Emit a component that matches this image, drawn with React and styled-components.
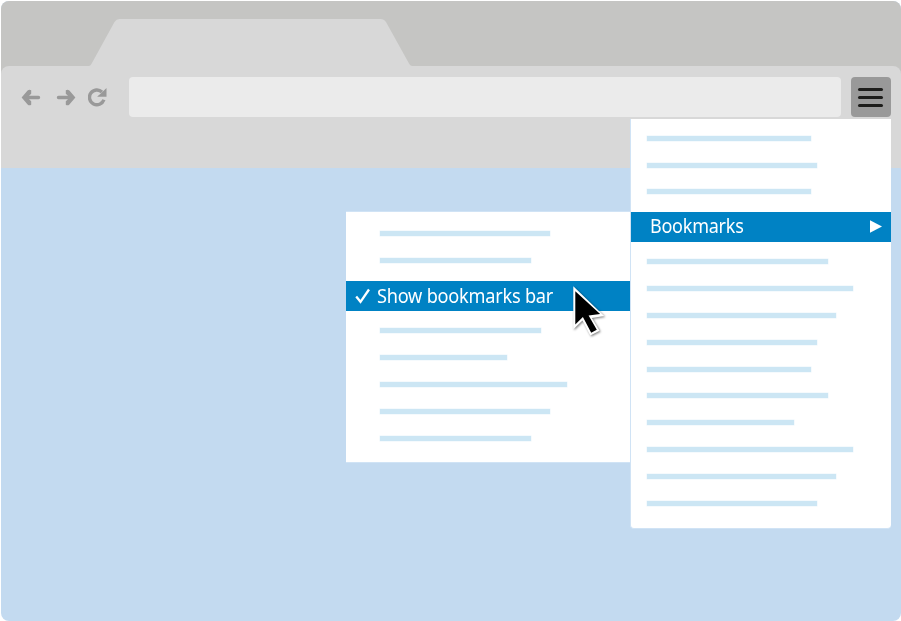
import React from "react";
import styled, { createGlobalStyle } from "styled-components";

const GlobalStyle = createGlobalStyle`
  *, *::before, *::after { box-sizing: border-box; }
  html, body { margin: 0; background: #fff; overflow: hidden; }
  body { font-family: "Noto Sans", "Open Sans", sans-serif; }
  svg { display: block; }
`;

const BrowserWindow = styled.main`
  position: relative;
  width: 900px;
  height: 620px;
  margin: 1px 0 0 1px;
  border-radius: 8px;
  overflow: hidden;
  background: #c3daf0;
`;

const TopArea = styled.header`
  height: 167px;
  background: #c5c5c3;
`;

const TabStrip = styled.div`
  height: 65px;
  padding: 18px 0 0 87.5px;
`;

const Toolbar = styled.div`
  display: flex;
  align-items: flex-start;
  height: 102px;
  padding: 11px 10px 0 20px;
  border-radius: 8px 8px 0 0;
  background: #d8d8d8;
`;

const NavIcons = styled.div`
  display: flex;
  align-items: center;
  gap: 12.5px;
  width: 108px;
  height: 40px;
`;

const AddressBar = styled.div`
  width: 712px;
  height: 40px;
  margin-right: 10px;
  border-radius: 4px;
  background: #ebebeb;
`;

const MenuButton = styled.button`
  display: flex;
  flex-direction: column;
  align-items: center;
  justify-content: center;
  gap: 5px;
  width: 40px;
  height: 40px;
  padding: 0 1px 0 0;
  border: 0;
  border-radius: 4px;
  background: #999;
`;

const MenuStroke = styled.span`
  width: 25px;
  height: 3px;
  border-radius: 2px;
  background: #1d1d1b;
`;

const MenuPanel = styled.section`
  position: absolute;
  left: 629px;
  top: 118px;
  width: 261px;
  height: 410px;
  border: solid #d0e3f5;
  border-width: 0 0 1px 1px;
  border-radius: 0 0 4px 4px;
  background: #fff;
`;

const SubmenuPanel = styled.section`
  position: absolute;
  left: 345px;
  top: 210px;
  width: 284px;
  height: 252px;
  border: solid #d0e3f5;
  border-width: 1px 0;
  background: #fff;
`;

const PlaceholderGroup = styled.div`
  display: flex;
  flex-direction: column;
  gap: ${(p) => p.$gap ?? 21.87}px;
  height: ${(p) => p.$height}px;
  padding: ${(p) => p.$top}px 0 0 ${(p) => p.$left}px;
`;

const Placeholder = styled.span`
  flex: none;
  width: ${(p) => p.$width}px;
  height: 5px;
  background: #cce6f4;
  box-shadow: 0 0 0 0.5px rgba(204, 230, 244, 0.4);
`;

const ActiveItem = styled.div`
  display: flex;
  align-items: center;
  height: 30px;
  padding: 0 9px 0 ${(p) => p.$left}px;
  background: #0082c4;
  color: #fff;
  font-size: 19px;
  letter-spacing: -0.25px;
  white-space: nowrap;
`;

const ItemLabel = styled.span`
  flex: 1;
  height: 30px;
  line-height: ${(p) => p.$leading}px;
  transform: scaleX(${(p) => p.$stretch});
  transform-origin: left center;
`;

const CheckSlot = styled.span`
  flex: none;
  width: 22px;
`;

const Pointer = styled.svg`
  position: absolute;
  left: 569px;
  top: 282px;
  filter: drop-shadow(1px 1px 1px rgba(0, 0, 0, 0.5));
`;

const TabShape = () => (
  <svg width="323" height="47" viewBox="0 0 323 47">
    <path d="M0 47Q1.700 46.500 2.700 44.500L25.500 3Q27.300 0 30.500 0H291.500Q295 0 297 3L320 44.500Q321 46.500 323 47Z" fill="#d8d8d8" />
  </svg>
);

const ArrowIcon = ({ forward }) => (
  <svg width="21" height="20" viewBox="0 0 21 20">
    <g transform={forward ? "matrix(-1 0 0 1 21 0)" : undefined}>
      <path d="M.6 10.500 6.600 3.600Q8.200 2 10.200 3.200V6.700L8 8.800H17.500A1.700 1.700 0 0 1 17.500 12.200H8L10.200 14.300V17.800Q8.200 19 6.600 17.400Z" fill="#999" />
    </g>
  </svg>
);

const ReloadIcon = () => (
  <svg width="20" height="20" viewBox="0 0 20 20">
    <path d="M14 5A7.400 7.400 0 1 0 15.900 12.800" fill="none" stroke="#999" strokeWidth="3.400" />
    <path d="M18.500 1V9.800H9.500V9.200L12.500 6.700Z" fill="#999" />
  </svg>
);

const CheckIcon = () => (
  <svg width="16" height="16" viewBox="0 0 16 16">
    <path d="M1.200 8.600 5.500 13.800 14 1.500" fill="none" stroke="#fff" strokeWidth="2.300" />
  </svg>
);

const SubmenuArrow = () => (
  <svg width="12" height="14" viewBox="0 0 12 14">
    <path d="M0 .3 12 6.500 0 12.700Z" fill="#fff" />
  </svg>
);

const Cursor = () => (
  <Pointer width="40" height="60" viewBox="0 0 40 60">
    <path d="M3.300 3.200V46.300L12.500 37.400 20.300 52.600 29.600 47.700 21.800 34.900 34.200 33Z" fill="#fff" />
    <path d="M5.300 8.300V41.400L12.900 34 21.200 49.700 26.800 46.700 18.600 32.500 30.100 31.100Z" fill="#000" />
  </Pointer>
);

const Lines = ({ widths, ...rest }) => (
  <PlaceholderGroup {...rest}>
    {widths.map((width, i) => <Placeholder key={i} $width={width} />)}
  </PlaceholderGroup>
);

export default function App() {
  return (
    <>
      <GlobalStyle />
      <BrowserWindow>
        <TopArea>
          <TabStrip><TabShape /></TabStrip>
          <Toolbar>
            <NavIcons>
              <ArrowIcon />
              <ArrowIcon forward />
              <ReloadIcon />
            </NavIcons>
            <AddressBar />
            <MenuButton aria-label="Menu">
              <MenuStroke /><MenuStroke /><MenuStroke />
            </MenuButton>
          </Toolbar>
        </TopArea>
        <MenuPanel>
          <Lines $height={93} $top={17.1} $left={16} $gap={21.6} widths={[164, 170, 164]} />
          <ActiveItem $left={19}>
            <ItemLabel $stretch={0.947} $leading={28}>Bookmarks</ItemLabel>
            <SubmenuArrow />
          </ActiveItem>
          <Lines $height={285} $top={17.2} $left={16} widths={[181, 206, 189, 170, 164, 181, 147, 206, 189, 170]} />
        </MenuPanel>
        <SubmenuPanel>
          <Lines $height={69} $top={19} $left={34} widths={[170, 151]} />
          <ActiveItem $left={9}>
            <CheckSlot><CheckIcon /></CheckSlot>
            <ItemLabel $stretch={0.956} $leading={30}>Show bookmarks bar</ItemLabel>
          </ActiveItem>
          <Lines $height={151} $top={17.2} $left={34} widths={[161, 127, 187, 170, 151]} />
        </SubmenuPanel>
        <Cursor />
      </BrowserWindow>
    </>
  );
}
